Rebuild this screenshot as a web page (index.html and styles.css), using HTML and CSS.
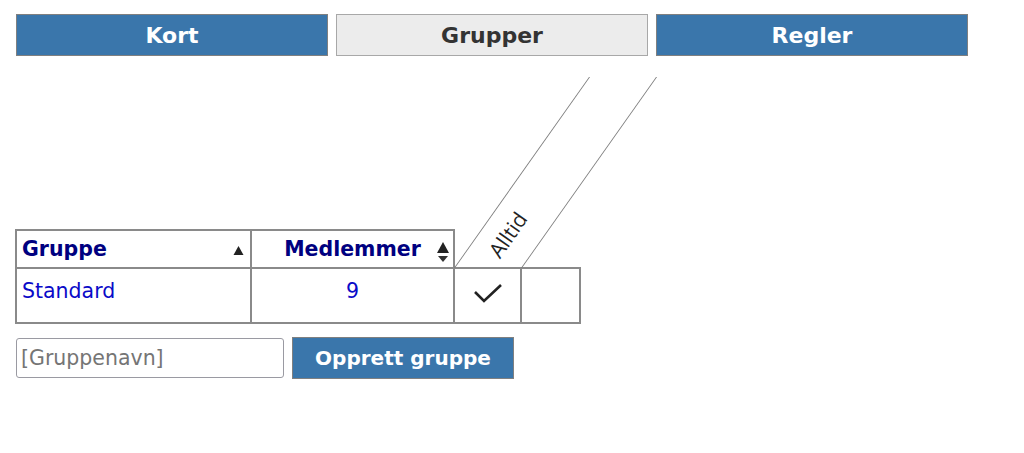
FILE: index.html
```html
<!DOCTYPE html>
<html lang="no">
<head>
  <meta charset="UTF-8">
  <meta name="viewport" content="width=device-width, initial-scale=1.0">
  <title>Grupper</title>
  <link rel="stylesheet" href="styles.css">
</head>
<body>
  <nav class="tabs">
    <a class="tab" href="#">Kort</a>
    <a class="tab aktiv" href="#">Grupper</a>
    <a class="tab" href="#">Regler</a>
  </nav>

  <main class="innhold">
    <table class="grupper">
      <colgroup>
        <col class="k-navn">
        <col class="k-medl">
        <col class="k-regel">
        <col class="k-tom">
      </colgroup>
      <thead>
        <tr>
          <th class="navn">Gruppe
            <svg class="sort" width="11" height="11" viewBox="0 0 11 11"><path d="M5.5 1 L10.5 10 L0.5 10 Z" fill="#222"/></svg>
          </th>
          <th class="medl">Medlemmer
            <svg class="sort sort2" width="14" height="22" viewBox="0 0 14 22"><path d="M7 1 L13 12 L1 12 Z" fill="#222"/><path d="M2 15 L12 15 L7 21 Z" fill="#333"/></svg>
          </th>
          <th class="regel">
            <div class="skraa"></div>
            <span class="regel-tekst">Alltid</span>
          </th>
          <th class="tom"></th>
        </tr>
      </thead>
      <tbody>
        <tr>
          <td class="navn"><a href="#">Standard</a></td>
          <td class="medl"><a href="#">9</a></td>
          <td class="regel">
            <svg width="30" height="22" viewBox="0 0 30 22"><path d="M2 10 L11 19 L28 3" fill="none" stroke="#222" stroke-width="2.6"/></svg>
          </td>
          <td class="tom"></td>
        </tr>
      </tbody>
    </table>

    <form class="ny-gruppe" onsubmit="return false">
      <input type="text" placeholder="[Gruppenavn]">
      <button type="submit">Opprett gruppe</button>
    </form>
  </main>
</body>
</html>
```

FILE: styles.css
```css
/* Globalt */
body {
  margin: 0;
  font-family: "DejaVu Sans", Verdana, sans-serif;
  background-color: #fff;
  color: #222;
}

/* Faner */
.tabs {
  display: flex;
  gap: 8px;
  padding: 14px 16px 0;
}

.tab {
  box-sizing: border-box;
  width: 312px;
  height: 42px;
  display: flex;
  align-items: center;
  justify-content: center;
  background-color: #3a76ab;
  border: 1px solid #808080;
  color: #fff;
  font-size: 22px;
  font-weight: bold;
  text-decoration: none;
}

.tab.aktiv {
  background-color: #ececec;
  border-color: #a8a8a8;
  color: #333;
}

/* Innhold */
.innhold {
  padding: 0 15px;
}

.grupper {
  margin-top: 173px;
  border-collapse: collapse;
  table-layout: fixed;
  width: 564px;
}

.k-navn { width: 235px; }
.k-medl { width: 203px; }
.k-regel { width: 67px; }
.k-tom { width: 59px; }

.grupper th,
.grupper td {
  border: 2px solid #8a8a8a;
  font-size: 20.5px;
  padding: 0 5px;
}

.grupper th {
  height: 36px;
  color: #000080;
  position: relative;
}

.grupper th.navn {
  text-align: left;
}

.grupper th.medl {
  text-align: center;
  padding-right: 30px;
  padding-left: 30px;
}

.sort {
  position: absolute;
  right: 6px;
  top: 14px;
}

.sort2 {
  top: 10px;
  right: 3px;
}

.grupper th.regel,
.grupper th.tom {
  border-top: none;
  border-left: none;
  border-right: none;
}

/* Skrå overskrift */
.skraa {
  position: absolute;
  left: -1px;
  bottom: -1px;
  width: 66px;
  height: 191px;
  border-left: 1.5px solid #7a7a7a;
  border-right: 1.5px solid #7a7a7a;
  transform-origin: left bottom;
  transform: skewX(-35.26deg);
}

.regel-tekst {
  position: absolute;
  left: 50px;
  bottom: 4px;
  font-family: "Open Sans", sans-serif;
  font-weight: normal;
  font-size: 21px;
  color: #222;
  white-space: nowrap;
  transform-origin: left bottom;
  transform: rotate(-55deg);
}

.grupper td {
  height: 40px;
  vertical-align: top;
  padding-top: 10px;
}

.grupper td a {
  color: #0a0ac8;
  text-decoration: none;
}

.grupper td.medl {
  text-align: center;
}

.grupper td.regel {
  text-align: center;
  padding: 13px 0 0;
}

/* Ny gruppe */
.ny-gruppe {
  display: flex;
  gap: 8px;
  align-items: center;
  margin-top: 13px;
  padding-left: 1px;
}

.ny-gruppe input {
  box-sizing: border-box;
  width: 268px;
  height: 40px;
  border: 1px solid #9a9aa2;
  border-radius: 3px;
  padding: 0 4px;
  font-family: "DejaVu Sans", sans-serif;
  font-size: 20.5px;
  color: #222;
}

.ny-gruppe input::placeholder {
  color: #757575;
}

.ny-gruppe button {
  box-sizing: border-box;
  width: 222px;
  height: 42px;
  background-color: #3a76ab;
  border: 1px solid #808080;
  color: #fff;
  font-family: "DejaVu Sans", sans-serif;
  font-size: 20px;
  font-weight: bold;
  cursor: pointer;
}
```
